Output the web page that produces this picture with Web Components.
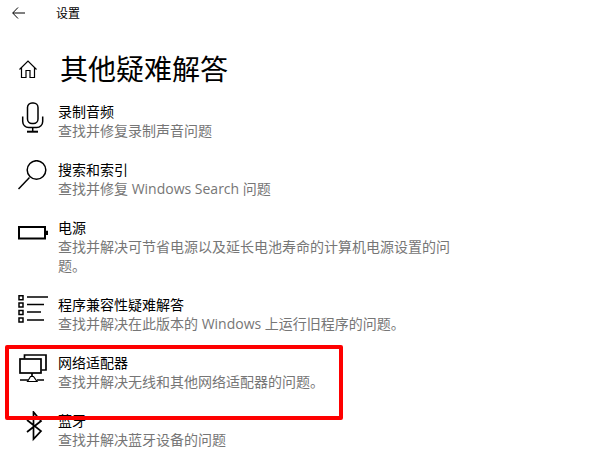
<!DOCTYPE html>
<html lang="zh">
<head>
<meta charset="utf-8">
<style>
html, body { margin: 0; background: #fff; }
body { width: 600px; height: 460px; overflow: hidden; font-family: "Open Sans", "Noto Sans CJK SC", sans-serif; }
</style>
</head>
<body>
<settings-page>
  <trouble-item title-text="录制音频" desc="查找并修复录制声音问题">
    <svg slot="icon" width="32" height="32" viewBox="0 0 32 32" fill="none" stroke="#000" stroke-width="1.5"><rect x="9.500" y="1" width="10.500" height="20.500" rx="4.500"/><path d="M4.700 14.500v5a6 6 0 0 0 6 6h8a6 6 0 0 0 6-6v-5"/><path d="M14.700 25.500v4"/><path d="M9 29.700h11" stroke-width="2"/></svg>
  </trouble-item>
  <trouble-item title-text="搜索和索引" desc="查找并修复 Windows Search 问题">
    <svg slot="icon" width="32" height="32" viewBox="0 0 32 32" fill="none" stroke="#000" stroke-width="1.500"><circle cx="18.500" cy="10" r="9.300"/><path d="M11.500 17.500 0.500 29"/></svg>
  </trouble-item>
  <trouble-item title-text="电源" desc="查找并解决可节省电源以及延长电池寿命的计算机电源设置的问题。">
    <svg slot="icon" width="32" height="32" viewBox="0 0 32 32" fill="none" stroke="#000" stroke-width="2"><rect x="1" y="9" width="26" height="11.500"/><path d="M29 12.700v4.300"/></svg>
  </trouble-item>
  <trouble-item title-text="程序兼容性疑难解答" desc="查找并解决在此版本的 Windows 上运行旧程序的问题。">
    <svg slot="icon" width="32" height="32" viewBox="0 0 32 32" fill="none" stroke="#000" stroke-width="1.500"><path d="M9 2h21M9 9.500h17M9 17h14M9 25h17"/><path d="M1 0.700h4v4H1zM1 8h4v4H1zM1 15.500h4v4H1zM1 23h4v4H1z"/></svg>
  </trouble-item>
  <trouble-item title-text="网络适配器" desc="查找并解决无线和其他网络适配器的问题。">
    <svg slot="icon" width="32" height="32" viewBox="0 0 32 32" fill="none" stroke="#000" stroke-width="1.700"><path d="M6.500 5.500V2h21.500v15h-4.500"/><rect x="2" y="6" width="21" height="14"/><path d="M14 20v3"/><path d="M9.500 28.500l3-5h3l3.500 5z" stroke-width="1.200"/><path d="M2 27h8M19 27h7" stroke-width="1.400"/></svg>
  </trouble-item>
  <trouble-item title-text="蓝牙" desc="查找并解决蓝牙设备的问题">
    <svg slot="icon" width="32" height="32" viewBox="0 0 32 32" fill="none" stroke="#000" stroke-width="1.700"><path d="M9 9 23 20l-7.500 8V1L23 10 9 21"/></svg>
  </trouble-item>
</settings-page>
<script>
const pageTemplate = document.createElement("template");
pageTemplate.innerHTML = `
<style>
:host { display: block; position: relative; width: 600px; height: 460px; overflow: hidden; color: #000; }
.topbar { display: flex; align-items: center; height: 28px; }
.back { margin: 0 0 2px 12px; width: 13px; height: 12px; display: block; }
.app { margin-left: 31px; font-size: 12px; line-height: 16px; }
.heading { display: flex; align-items: center; height: 40px; margin-top: 21px; }
.home { margin-left: 19px; width: 18px; height: 18px; display: block; }
h1 { margin: 0 0 0 23px; font-size: 28px; line-height: 40px; font-weight: 400; }
.list { display: flex; flex-direction: column; margin-top: 13px; }
.mark { position: absolute; left: 5px; top: 345px; width: 330px; height: 67px; border: 4px solid #fe0000; border-radius: 2px; }
</style>
<div class="topbar">
  <svg class="back" viewBox="0 0 13 12" fill="none" stroke="#000" stroke-width="1"><path d="M0.800 6H13M6 0.500 0.700 6 6 11.500"/></svg>
  <span class="app">设置</span>
</div>
<div class="heading">
  <svg class="home" viewBox="0 0 18 18" fill="none" stroke="#000" stroke-width="1.200"><path d="M0.500 9.500 9 1l8.500 8.500"/><path d="M2.500 7.500v10H7v-7h4v7h4.500v-10"/></svg>
  <h1>其他疑难解答</h1>
</div>
<div class="list"><slot></slot></div>
<div class="mark"></div>
`;

class SettingsPage extends HTMLElement {
  constructor() {
    super();
    this.attachShadow({ mode: "open" });
    this.shadowRoot.appendChild(pageTemplate.content.cloneNode(true));
  }
}

const itemTemplate = document.createElement("template");
itemTemplate.innerHTML = `
<style>
:host { display: flex; width: 460px; margin-bottom: 20px; }
.icon { flex: none; width: 32px; height: 32px; margin: 0 8px 0 18px; }
.text { width: 396px; font-size: 14px; line-height: 19px; }
.title { color: #000; }
.desc { color: #767676; }
</style>
<div class="icon"><slot name="icon"></slot></div>
<div class="text">
  <div class="title"></div>
  <div class="desc"></div>
</div>
`;

class TroubleItem extends HTMLElement {
  constructor() {
    super();
    this.attachShadow({ mode: "open" });
    this.shadowRoot.appendChild(itemTemplate.content.cloneNode(true));
  }
  connectedCallback() {
    this.shadowRoot.querySelector(".title").textContent = this.getAttribute("title-text");
    this.shadowRoot.querySelector(".desc").textContent = this.getAttribute("desc");
  }
}

customElements.define("settings-page", SettingsPage);
customElements.define("trouble-item", TroubleItem);
</script>
</body>
</html>
